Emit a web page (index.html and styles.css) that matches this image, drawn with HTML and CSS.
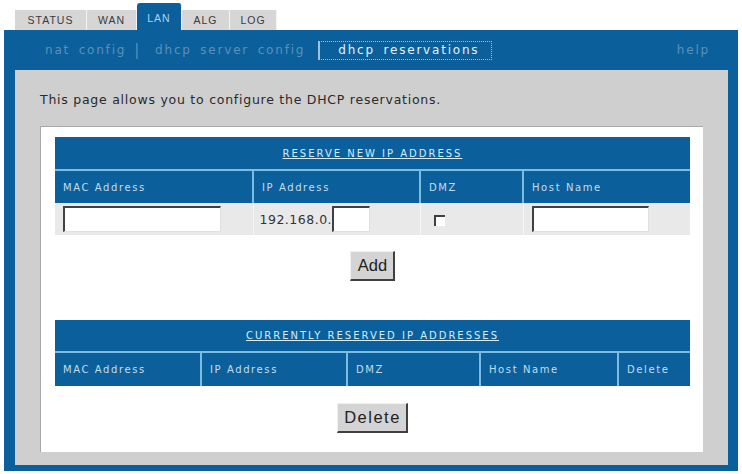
FILE: index.html
```html
<!DOCTYPE html>
<html>
<head>
<meta charset="utf-8">
<link rel="stylesheet" href="styles.css">
</head>
<body>
<div class="tabs">
  <div class="tab">STATUS</div>
  <div class="tab">WAN</div>
  <div class="tab active">LAN</div>
  <div class="tab">ALG</div>
  <div class="tab">LOG</div>
</div>
<div class="panel">
  <div class="subnav">
    <span class="link">nat config</span>
    <span class="sep">|</span>
    <span class="link">dhcp server config</span>
    <span class="link current">dhcp reservations</span>
    <span class="help">help</span>
  </div>
  <div class="content">
    <p class="intro">This page allows you to configure the DHCP reservations.</p>
    <div class="box">
      <table class="grid new">
        <tr class="title"><td colspan="4"><u>RESERVE NEW IP ADDRESS</u></td></tr>
        <tr class="head">
          <td class="c1">MAC Address</td>
          <td class="c2">IP Address</td>
          <td class="c3">DMZ</td>
          <td class="c4">Host Name</td>
        </tr>
        <tr class="inputs">
          <td><span class="field mac"></span></td>
          <td><span class="ip">192.168.0.</span><span class="field oct"></span></td>
          <td><span class="check"></span></td>
          <td><span class="field host"></span></td>
        </tr>
      </table>
      <div class="btnrow add-row"><span class="btn">Add</span></div>
      <table class="grid cur">
        <tr class="title"><td colspan="5"><u>CURRENTLY RESERVED IP ADDRESSES</u></td></tr>
        <tr class="head">
          <td class="d1">MAC Address</td>
          <td class="d2">IP Address</td>
          <td class="d3">DMZ</td>
          <td class="d4">Host Name</td>
          <td class="d5">Delete</td>
        </tr>
      </table>
      <div class="btnrow del-row"><span class="btn del">Delete</span></div>
    </div>
  </div>
</div>
</body>
</html>
```

FILE: styles.css
```css
* { box-sizing: border-box; }
body {
  margin: 0;
  background: #fff;
  font-family: "DejaVu Sans", Verdana, sans-serif;
}
.tabs {
  display: flex;
  align-items: flex-end;
  height: 30px;
  padding-left: 15px;
}
.tab {
  height: 20px;
  background: #d6d6d6;
  border-right: 1px solid #f4f4f4;
  font-family: "Liberation Sans", Arial, sans-serif;
  font-size: 10.5px;
  color: #3a3a3a;
  line-height: 21px;
  text-align: center;
  letter-spacing: 1px;
}
.tab:nth-child(1) { width: 72px; }
.tab:nth-child(2) { width: 50px; }
.tab:nth-child(3) { width: 45px; }
.tab:nth-child(4) { width: 48px; }
.tab:nth-child(5) { width: 47px; }
.tab.active {
  height: 27px;
  background: #0b609b;
  color: #a9d2ee;
  line-height: 30px;
  border-radius: 3px 3px 0 0;
}
.panel {
  margin: 0 4px;
  height: 441px;
  background: #0b609b;
  padding: 0 10px 6px 11px;
}
.subnav {
  height: 40px;
  display: flex;
  align-items: center;
  padding-left: 30px;
  font-size: 12px;
  letter-spacing: 1.8px;
  word-spacing: 3px;
  color: #5d8fb8;
}
.sep { margin: 0 14px 0 8px; font-size: 15px; }
.link.current {
  margin-left: 13px;
  color: #e6f1f9;
  border: 1px dotted #9cc3de;
  border-left: 2px solid #9cc3de;
  padding: 1px 12px 2px 18px;
}
.help { margin-left: auto; margin-right: 18px; }
.content {
  height: 395px;
  background: #cfcfcf;
  padding: 0 25px;
  overflow: hidden;
}
.intro {
  margin: 0;
  height: 56px;
  padding-top: 22px;
  font-size: 12.5px;
  letter-spacing: 0.75px;
  color: #2a2a2a;
}
.box {
  height: 326px;
  background: #fff;
  border-top: 1px solid #a8a8a8;
  border-left: 1px solid #a8a8a8;
  padding: 10px 0 0 14px;
}
.grid {
  border-collapse: collapse;
  width: 635px;
  font-size: 10px;
  letter-spacing: 1.6px;
  color: #c4dcee;
}
.grid td { padding: 0; }
.title td {
  background: #0b609b;
  height: 33px;
  text-align: center;
  color: #d8ebf8;
  letter-spacing: 2px;
  border-bottom: 2px solid #7cbbe2;
}
.head td {
  background: #0b609b;
  height: 33px;
  padding-left: 8px;
  border-left: 2px solid #7cbbe2;
  vertical-align: middle;
}
.head td:first-child { border-left: none; }
.new .c1 { width: 198px; }
.new .c2 { width: 167px; }
.new .c3 { width: 103px; }
.new .c4 { width: 167px; }
.inputs td {
  background: #e9e9e9;
  height: 32px;
  border-left: 1px solid #f6f6f6;
  padding-left: 8px;
  color: #333;
  font-size: 12.5px;
  letter-spacing: 0.5px;
  vertical-align: middle;
}
.inputs td:first-child { border-left: none; }
.field {
  display: inline-block;
  vertical-align: middle;
  height: 26px;
  background: #fff;
  border-top: 2px solid #404040;
  border-left: 2px solid #404040;
  border-right: 1px solid #e0e0e0;
  border-bottom: 1px solid #e0e0e0;
}
.mac { width: 158px; }
.oct { width: 38px; }
.host { width: 117px; }
.ip { vertical-align: middle; margin-left: -2px; }
.check {
  display: inline-block;
  width: 11px;
  height: 11px;
  margin-left: 5px;
  background: #fff;
  border-top: 2px solid #404040;
  border-left: 2px solid #404040;
  vertical-align: middle;
}
.btnrow {
  width: 635px;
  display: flex;
  justify-content: center;
}
.add-row { height: 85px; padding-top: 16px; align-items: flex-start; }
.del-row { padding-top: 17px; }
.btn {
  display: inline-block;
  background: #d4d4d4;
  border-top: 1px solid #f0f0f0;
  border-left: 1px solid #f0f0f0;
  border-right: 2px solid #404040;
  border-bottom: 2px solid #404040;
  font-family: "Liberation Sans", Arial, sans-serif;
  font-size: 16.5px;
  color: #222;
  padding: 3px 6px 3px 7px;
  line-height: 21px;
}
.btn.del { letter-spacing: 1.5px; padding-left: 6px; padding-right: 5px; }
.cur .d1 { width: 146px; }
.cur .d2 { width: 146px; }
.cur .d3 { width: 133px; }
.cur .d4 { width: 138px; }
.cur .d5 { width: 72px; }
.cur .title td { height: 32px; }
.cur .head td { height: 34px; }
```
